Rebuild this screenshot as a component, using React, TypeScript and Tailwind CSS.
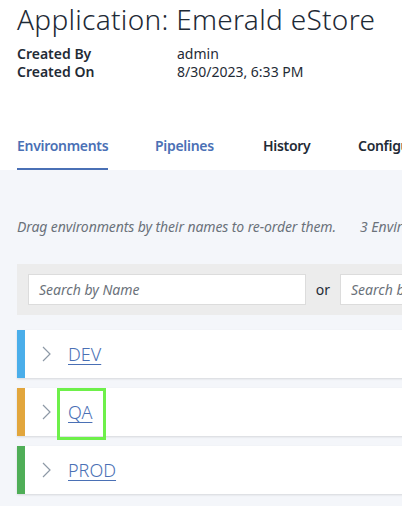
import React from "react";

const Chevron = () => (
  <svg width="9" height="16" viewBox="0 0 9 16" fill="none" className="shrink-0">
    <path d="M1 1 L8 8 L1 15" stroke="#8d99a6" strokeWidth="1.2" />
  </svg>
);

const rows = [
  { name: "DEV", color: "bg-[#4aaeea]" },
  { name: "QA", color: "bg-[#e2a63c]", hl: true },
  { name: "PROD", color: "bg-[#4fae57]" },
];

export default function App() {
  return (
    <div
      className="w-[402px] h-[506px] overflow-hidden bg-white text-[#1f2b36]"
      style={{ fontFamily: '"Noto Sans", sans-serif' }}
    >
      <div className="px-[17px] pt-[1px]">
        <h1 className="text-[28px] leading-[36px] font-light tracking-[0.3px] whitespace-nowrap text-[#1e2a36]">
          Application: Emerald eStore
        </h1>
        <div className="mt-[8px] grid grid-cols-[160px_1fr] text-[14px] leading-[18px] whitespace-nowrap">
          <div className="font-semibold">Created By</div>
          <div>admin</div>
          <div className="font-semibold">Created On</div>
          <div>8/30/2023, 6:33 PM</div>
        </div>
      </div>
      <div className="mt-[56px] flex pl-[17px] text-[14px] leading-[18px] font-semibold tracking-[-0.3px] whitespace-nowrap">
        <div className="w-[138px] shrink-0">
          <div className="inline-block pb-[13px] border-b-2 border-[#4a70b5] text-[#4a70b5]">Environments</div>
        </div>
        <div className="w-[108px] shrink-0 text-[#4a70b5]">Pipelines</div>
        <div className="w-[95px] shrink-0">History</div>
        <div className="shrink-0">Configuration</div>
      </div>
      <div className="bg-[#f4f6fa] h-[400px] pl-[17px] pt-[48px]">
        <div className="flex whitespace-nowrap text-[14px] leading-[18px] italic text-[#6b727a]">
          <div className="w-[343px] shrink-0 tracking-[-0.1px]">Drag environments by their names to re-order them.</div>
          <div>3 Environments</div>
        </div>
        <div className="mt-[28px] w-[600px] bg-[#ececec] py-[10px] pl-[11px] flex items-center">
          <div className="w-[278px] h-[31px] bg-white border border-[#dcdcdc] flex items-center pl-[10px] text-[14px] italic text-[#6b727a]">
            Search by Name
          </div>
          <div className="w-[34px] text-center text-[14px] text-[#1f2b36]">or</div>
          <div className="w-[250px] h-[31px] bg-white border border-[#dcdcdc] flex items-center pl-[10px] text-[14px] italic text-[#6b727a] whitespace-nowrap">
            Search by Tag
          </div>
        </div>
        <div className="mt-[15px] flex flex-col gap-[10px]">
          {rows.map((r) => (
            <div key={r.name} className="relative w-[600px] h-[48px] bg-white flex items-center shadow-[0_1px_2px_rgba(0,0,0,0.12)]">
              <div className={`w-[8px] h-full ${r.color}`} />
              <div className="ml-[17px]">
                <Chevron />
              </div>
              <a className="ml-[17px] text-[18px] leading-[24px] font-light text-[#4a70b5] underline underline-offset-[3px]">
                {r.name}
              </a>
              {r.hl && (
                <div className="absolute left-[40px] top-0 w-[49px] h-[52px] border-[3px] border-[#6ef04a]" />
              )}
            </div>
          ))}
        </div>
      </div>
    </div>
  );
}
